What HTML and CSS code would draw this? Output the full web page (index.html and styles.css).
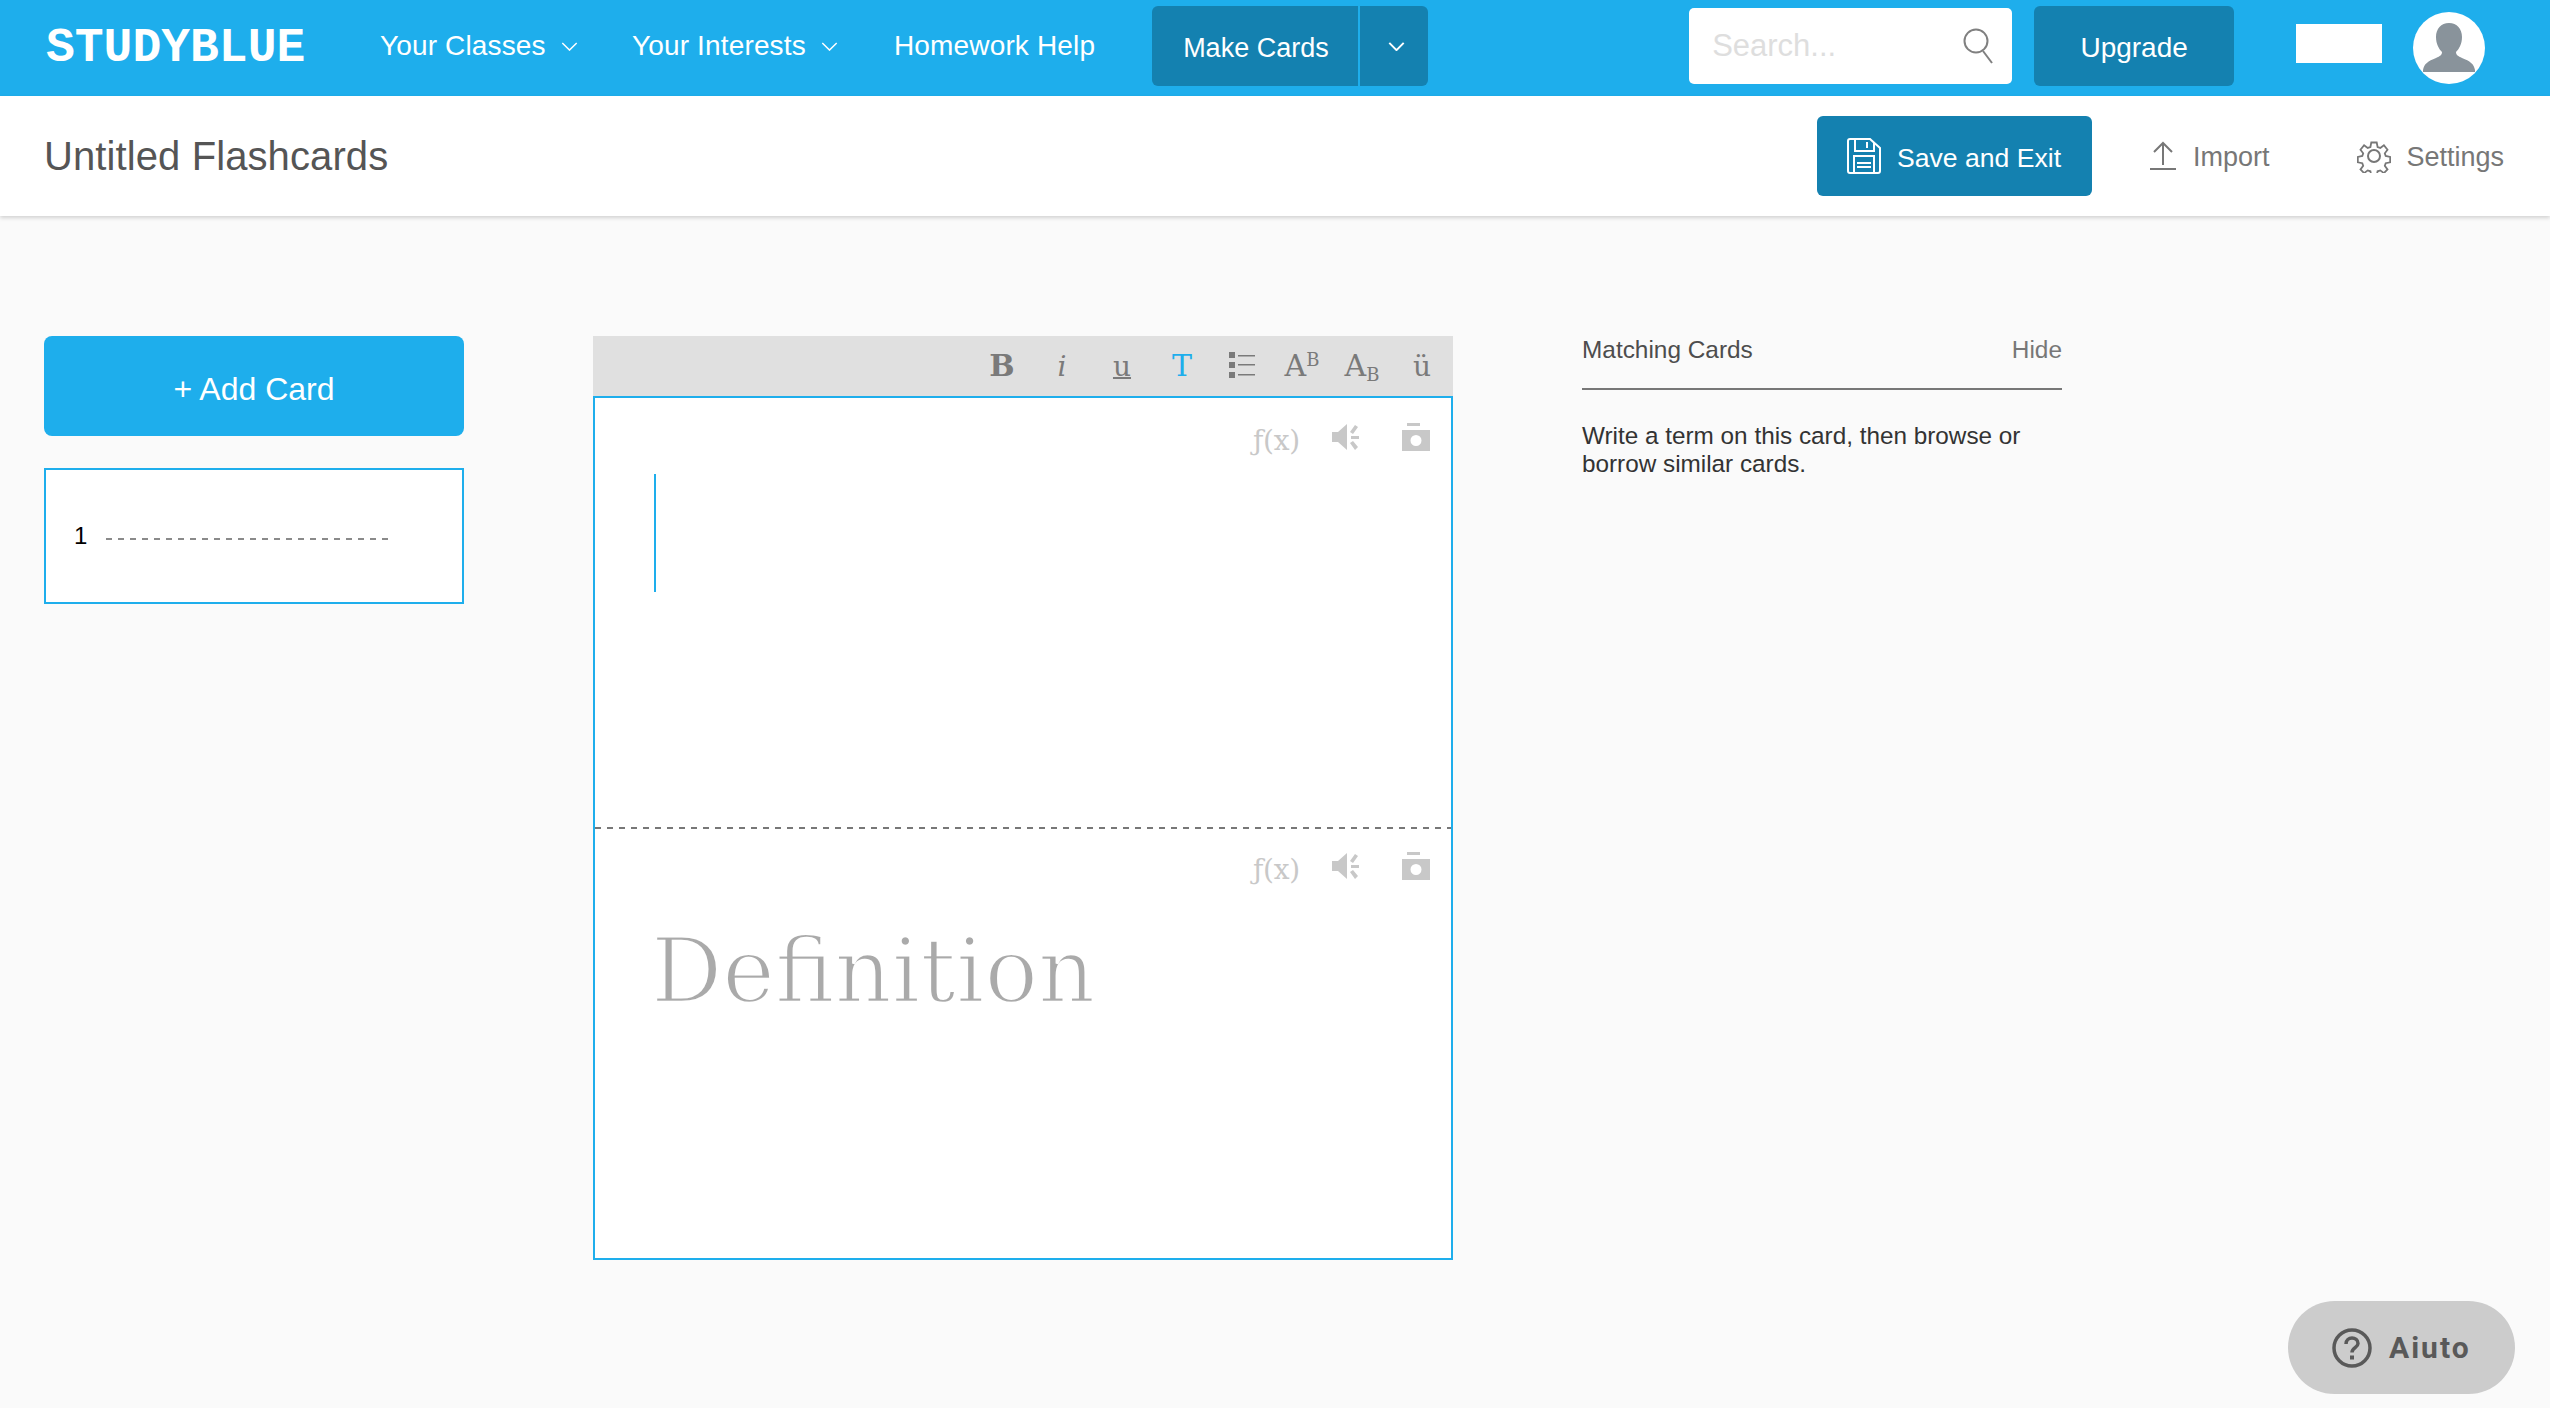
FILE: index.html
```html
<!DOCTYPE html>
<html lang="en">
<head>
<meta charset="utf-8">
<title>Untitled Flashcards</title>
<link rel="stylesheet" href="styles.css">
</head>
<body>
<header class="topbar">
  <div class="logo">STUDYBLUE</div>
  <nav class="nav">
    <a class="nav-item nav-classes">Your Classes<svg class="chev" viewBox="0 0 18 10"><path d="M1 1l8 8 8-8"/></svg></a>
    <a class="nav-item nav-interests">Your Interests<svg class="chev" viewBox="0 0 18 10"><path d="M1 1l8 8 8-8"/></svg></a>
    <a class="nav-item">Homework Help</a>
  </nav>
  <div class="make">
    <span class="make-label">Make Cards</span>
    <span class="make-arrow"><svg class="chev chev-bold" viewBox="0 0 18 10"><path d="M1 1l8 8 8-8"/></svg></span>
  </div>
  <div class="search">
    <span class="search-text">Search...</span>
    <svg class="search-icon" viewBox="0 0 32 36"><circle cx="13" cy="13" r="11.5"/><path d="M20 23l9 12"/></svg>
  </div>
  <div class="upgrade">Upgrade</div>
  <div class="blank"></div>
  <div class="avatar">
    <svg viewBox="0 0 72 72"><path class="person" d="M36 11c8 0 13 6 13 14 0 7-3 12-6 15 0 3 2 4 6 6 8 3 12 6 13 12v2H10v-2c1-6 5-9 13-12 4-2 6-3 6-6-3-3-6-8-6-15 0-8 5-14 13-14z"/></svg>
  </div>
</header>

<section class="subbar">
  <h1 class="title">Untitled Flashcards</h1>
  <div class="save">
    <svg class="save-icon" viewBox="0 0 34 36"><path d="M3 1h20l10 9v23a2 2 0 0 1-2 2H3a2 2 0 0 1-2-2V3a2 2 0 0 1 2-2z"/><path d="M8 1v12h19V5M20 4v6M7 35V18h20v17M10 25h14M10 29h14"/></svg>
    <span>Save and Exit</span>
  </div>
  <div class="action action-import">
    <svg class="import-icon" viewBox="0 0 28 30"><path d="M14 24V3M5 11l9-9 9 9M1 28h26"/></svg>
    <span>Import</span>
  </div>
  <div class="action action-settings">
    <svg class="gear-icon" viewBox="0 0 34 34"><path d="M14 2h6l1 5 3 1 4-3 4 5-3 4 1 3 5 1v6l-5 1-1 3 3 4-4 4-4-3-3 1-1 5h-6l-1-5-3-1-4 3-4-4 3-4-1-3-5-1v-6l5-1 1-3-3-4 4-5 4 3 3-1z" transform="translate(1.7 1.7) scale(.9)"/><circle cx="17" cy="17" r="6"/></svg>
    <span>Settings</span>
  </div>
</section>

<main class="main">
  <aside class="cards-col">
    <div class="add-card">+ Add Card</div>
    <div class="card-item">
      <span class="card-num">1</span>
      <span class="card-dash"></span>
    </div>
  </aside>

  <section class="editor">
    <div class="toolbar">
      <span class="tb tb-b">B</span>
      <span class="tb tb-i">i</span>
      <span class="tb tb-u">u</span>
      <span class="tb tb-t">T</span>
      <span class="tb"><svg class="list-icon" viewBox="0 0 26 26"><path d="M0 0h6v6H0zM0 10h6v6H0zM0 20h6v6H0z"/><path d="M9 3h17v1.600H9zM9 12h17v1.600H9zM9 22h17v1.600H9z"/></svg></span>
      <span class="tb tb-a">A<sup>B</sup></span>
      <span class="tb tb-a">A<sub>B</sub></span>
      <span class="tb tb-uu">ü</span>
    </div>
    <div class="card">
      <div class="side side-front">
        <div class="tools">
          <span class="fx">ƒ(x)</span>
          <svg class="speaker" viewBox="0 0 28 28"><path d="M0 9h6l9-8v26l-9-8H0z"/><path d="M18 9l5-7 3 2-5 7zM19 13h8v3h-8zM18 20l3-2 5 6-3 3z"/></svg>
          <svg class="camera" viewBox="0 0 28 28"><path d="M5 0h13v3H5z"/><path fill-rule="evenodd" d="M0 7h28v21H0zM14 12a5.500 5.500 0 1 0 0 11 5.500 5.500 0 0 0 0-11z"/></svg>
        </div>
        <div class="caret"></div>
      </div>
      <div class="side side-back">
        <div class="tools">
          <span class="fx">ƒ(x)</span>
          <svg class="speaker" viewBox="0 0 28 28"><path d="M0 9h6l9-8v26l-9-8H0z"/><path d="M18 9l5-7 3 2-5 7zM19 13h8v3h-8zM18 20l3-2 5 6-3 3z"/></svg>
          <svg class="camera" viewBox="0 0 28 28"><path d="M5 0h13v3H5z"/><path fill-rule="evenodd" d="M0 7h28v21H0zM14 12a5.500 5.500 0 1 0 0 11 5.500 5.500 0 0 0 0-11z"/></svg>
        </div>
        <div class="placeholder">Definition</div>
      </div>
    </div>
  </section>

  <aside class="matching">
    <div class="matching-head">
      <span class="matching-title">Matching Cards</span>
      <span class="matching-hide">Hide</span>
    </div>
    <p class="matching-text">Write a term on this card, then browse or borrow similar cards.</p>
  </aside>
</main>

<div class="help">
  <svg class="help-icon" viewBox="0 0 40 40"><circle cx="20" cy="20" r="18"/><path d="M14 16c0-4 3-6 6-6s6 2 6 5.500c0 4-6 4.500-6 9"/><path class="dot" d="M18 27.500h4v4h-4z"/></svg>
  <span>Aiuto</span>
</div>
</body>
</html>
```

FILE: styles.css
```css
* { box-sizing: border-box; }
html, body { margin: 0; height: 100%; }
body {
  background: #fafafa;
  font-family: "Liberation Sans", Arial, sans-serif;
  overflow: hidden;
}

.topbar {
  height: 96px;
  background: #1eaeec;
  display: flex;
  align-items: center;
  color: #fff;
  padding: 0 0 4px 46px;
}
.logo {
  font-family: "Liberation Mono", monospace;
  font-weight: 700;
  font-size: 48px;
  width: 258px;
  line-height: 1;
  margin-top: 3px;
}
.nav { display: flex; align-items: center; margin-left: 76px; }
.nav-item { font-size: 28px; letter-spacing: .15px; display: flex; align-items: center; }
.nav-classes { width: 252px; }
.nav-interests { width: 262px; }
.chev { width: 17px; height: 9px; margin-left: 15px; fill: none; stroke: #fff; stroke-width: 1.6; }
.chev-bold { margin: 0; stroke-width: 2.2; }
.make {
  margin-left: 57px;
  width: 276px;
  height: 80px;
  background: #1481b0;
  border-radius: 6px;
  display: flex;
  font-size: 27px;
}
.make-label { width: 208px; padding: 5px 0 0 31px; display: flex; align-items: center; border-right: 2px solid #1eaeec; }
.make-arrow { flex: 1; display: flex; align-items: center; justify-content: center; padding-left: 5px; }
.search {
  margin-left: 261px;
  width: 323px;
  height: 76px;
  background: #fff;
  border-radius: 5px;
  display: flex;
  align-items: center;
  justify-content: space-between;
  padding: 0 17px 0 23px;
}
.search-text { font-size: 31px; color: #dedede; }
.search-icon { width: 32px; height: 36px; fill: none; stroke: #808080; stroke-width: 2; }
.upgrade {
  margin-left: 22px;
  width: 200px;
  height: 80px;
  background: #1481b0;
  border-radius: 6px;
  display: flex;
  align-items: center;
  justify-content: center;
  font-size: 28px;
  padding-top: 3px;
}
.blank { margin-left: 62px; width: 86px; height: 39px; background: #fff; margin-bottom: 5px; }
.avatar { margin: 4px 0 0 31px; width: 72px; height: 72px; border-radius: 50%; background: #fff; overflow: hidden; }
.avatar svg { display: block; width: 72px; height: 72px; }
.person { fill: #89939b; }

.subbar {
  height: 120px;
  background: #fff;
  box-shadow: 0 2px 4px rgba(0,0,0,.16);
  display: flex;
  align-items: center;
  padding-left: 44px;
  position: relative;
}
.title { margin: 0; font-size: 40px; font-weight: 400; color: #555; letter-spacing: .1px; width: 1773px; }
.save {
  width: 275px;
  height: 80px;
  background: #1481b0;
  border-radius: 6px;
  color: #fff;
  font-size: 26.600px;
  display: flex;
  align-items: center;
  padding-left: 30px;
  gap: 16px;
}
.save span { padding-top: 4px; }
.action span { padding-top: 3px; }
.save-icon { width: 34px; height: 36px; fill: none; stroke: #fff; stroke-width: 2; }
.action { display: flex; align-items: center; color: #777; font-size: 27px; }
.action-import { margin-left: 57px; gap: 16px; }
.action-settings { margin-left: 87px; gap: 16px; }
.import-icon { width: 28px; height: 30px; fill: none; stroke: #777; stroke-width: 2; }
.gear-icon { width: 34px; height: 34px; fill: none; stroke: #777; stroke-width: 2; }

.main { display: flex; align-items: flex-start; padding: 120px 0 0 44px; gap: 129px; }
.cards-col { width: 420px; }
.add-card {
  height: 100px;
  background: #1eaeec;
  border-radius: 8px;
  color: #fff;
  font-size: 32px;
  display: flex;
  align-items: center;
  justify-content: center;
  padding-top: 6px;
}
.card-item {
  margin-top: 32px;
  height: 136px;
  background: #fff;
  border: 2px solid #1eaeec;
  display: flex;
  align-items: center;
  padding-left: 28px;
}
.card-num { font-size: 24px; color: #000; width: 32px; }
.card-dash { width: 286px; height: 2px; margin-top: 6px; background: repeating-linear-gradient(90deg, #8a8a8a 0 6px, transparent 6px 12px); }

.editor { width: 860px; }
.toolbar {
  height: 60px;
  background: #e0e0e0;
  display: flex;
  justify-content: flex-end;
  align-items: baseline;
  padding: 15px 1px 0 0;
  font-family: "DejaVu Serif", serif;
  color: #7a7a7a;
}
.tb { width: 60px; text-align: center; font-size: 28px; line-height: 30px; }
.tb-b { font-weight: 700; font-size: 30px; }
.tb-i { font-style: italic; }
.tb-u { text-decoration: underline; text-decoration-thickness: 2px; }
.tb-t { color: #1eaeec; font-size: 30px; }
.tb-a { font-size: 30px; }
.tb-a sup, .tb-a sub { font-size: 18px; line-height: 0; }
.tb-a sup { vertical-align: 10px; }
.tb-a sub { vertical-align: -5px; }
.list-icon { display: inline-block; width: 26px; height: 26px; fill: #7a7a7a; vertical-align: -2px; }

.card { height: 864px; background: #fff; border: 2px solid #1eaeec; display: flex; flex-direction: column; }
.side { padding: 25px 21px 0 59px; }
.side-front {
  height: 431px;
  background: repeating-linear-gradient(90deg, #777 0 6px, transparent 6px 12px) left bottom / 100% 2px no-repeat;
}
.side-back { flex: 1; padding-top: 23px; }
.tools { display: flex; justify-content: flex-end; align-items: center; height: 28px; color: #c8c8c8; }
.fx { font-family: "DejaVu Serif", serif; font-size: 28px; width: 47px; margin-top: 6px; white-space: nowrap; letter-spacing: -.3px; }
.speaker { width: 28px; height: 28px; margin-left: 32px; fill: #c8c8c8; }
.camera { width: 28px; height: 28px; margin-left: 42px; fill: #c8c8c8; }
.caret { width: 2px; height: 118px; margin-top: 23px; background: #1eaeec; }
.placeholder {
  font-family: "DejaVu Serif", serif;
  font-size: 89px;
  line-height: 1;
  color: #aaa;
  margin: 47px 0 0 -3px;
  -webkit-text-stroke: 2.500px #fff;
}

.matching { width: 480px; }
.matching-head {
  display: flex;
  justify-content: space-between;
  font-size: 24.400px;
  height: 54px;
  border-bottom: 2px solid #777;
  color: #4d4d4d;
}
.matching-hide { color: #777; }
.matching-text { margin: 32px 0 0; font-size: 24.300px; line-height: 28px; color: #333; }

.help {
  position: fixed;
  left: 2288px;
  top: 1301px;
  width: 227px;
  height: 93px;
  border-radius: 47px;
  background: #ccc;
  display: flex;
  align-items: center;
  padding-left: 44px;
  gap: 17px;
  font-family: Roboto, sans-serif;
  font-weight: 700;
  font-size: 30px;
  letter-spacing: 2px;
  color: #595959;
}
.help-icon { width: 40px; height: 40px; fill: none; stroke: #595959; stroke-width: 3.500; }
.help-icon .dot { fill: #595959; stroke: none; }
```
